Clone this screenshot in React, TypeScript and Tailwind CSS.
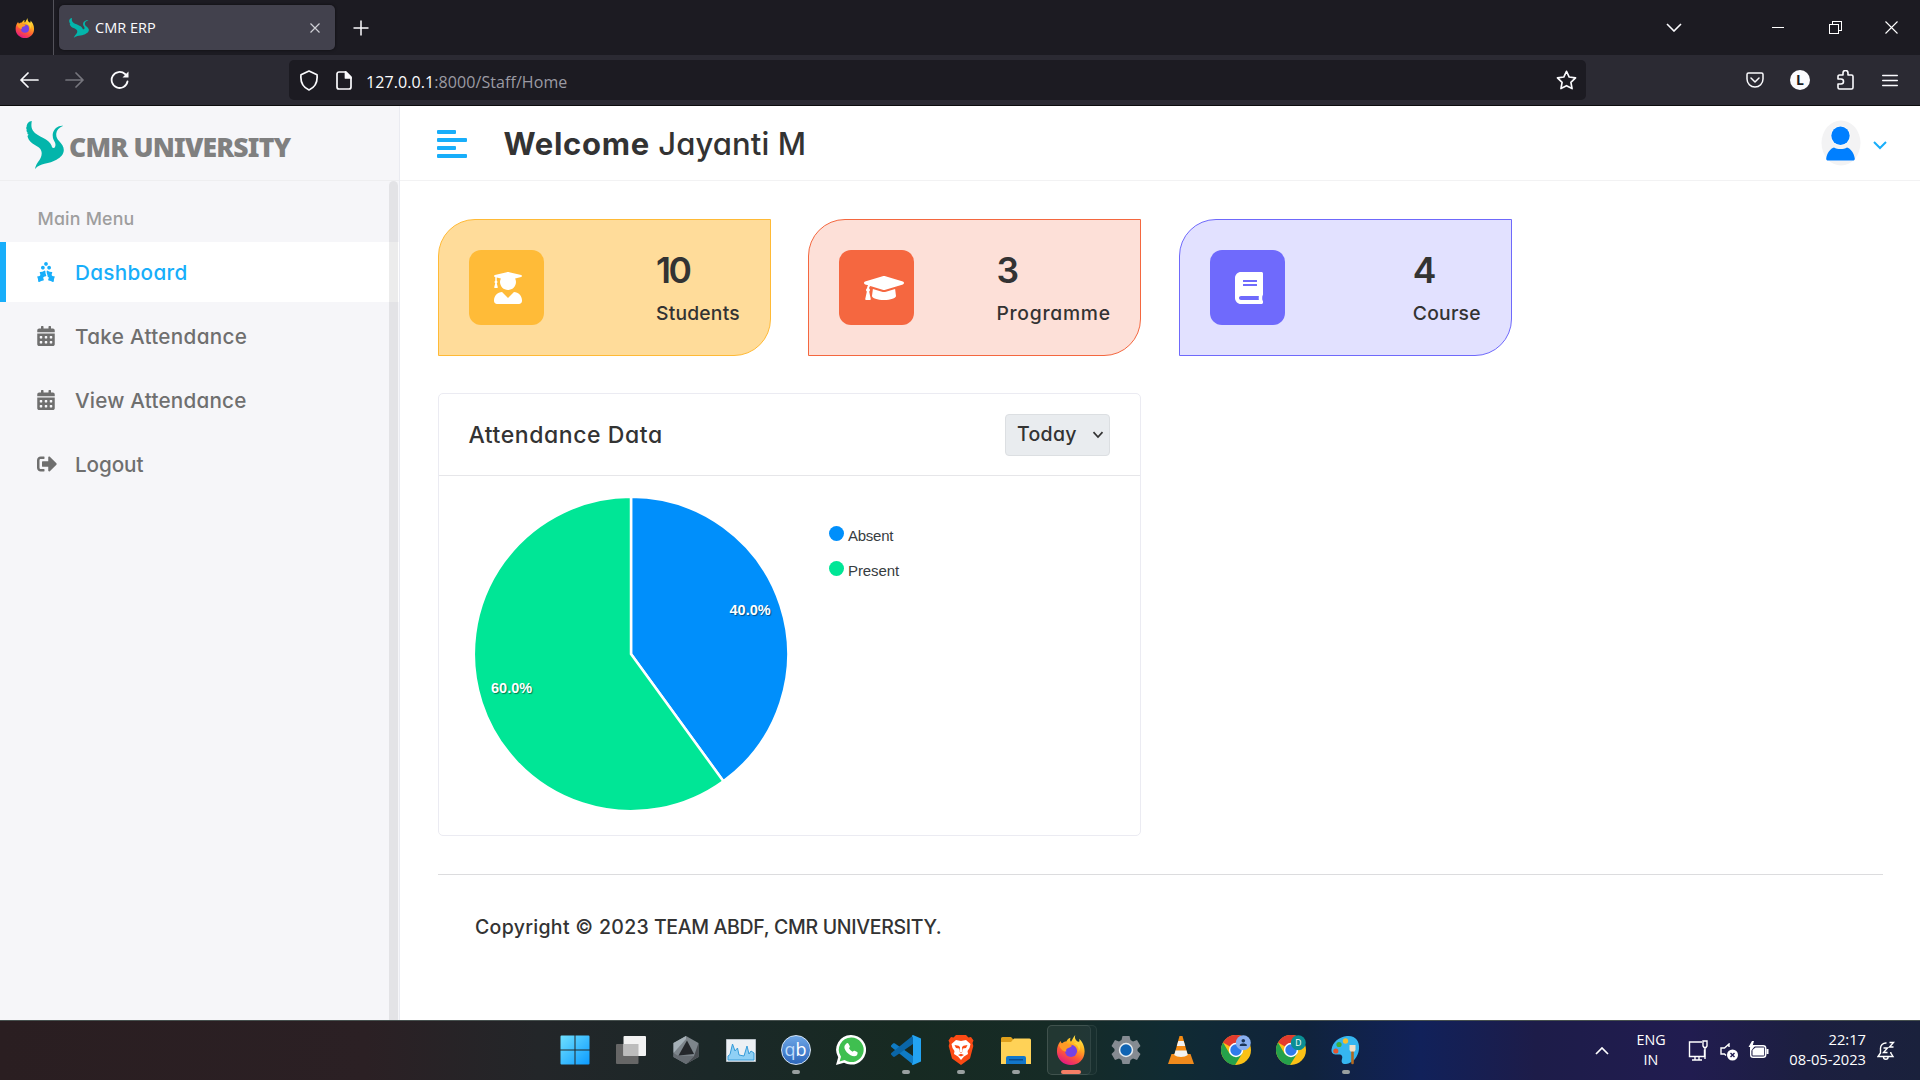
import React from "react";
import { FaHollyBerry, FaCalendarAlt, FaSignOutAlt, FaUserGraduate, FaGraduationCap, FaBook } from "react-icons/fa";

const SEGOE = "font-['Open_Sans',sans-serif]";

function Swan({ className }: { className: string }) {
  return (
    <svg viewBox="0 0 38 48" className={className} preserveAspectRatio="none">
      <path
        fill="#03b5ab"
        d="M5.800 0C3 .4.700 2.500.7 5.500c-.8 1.300-.5 2.300.1 3.300-.7 1 0 2 .7 2.500-.5 1 0 2 1.200 2.500C1.500 14.500 1.300 15 1.700 16c1 3.500 3.500 6 6.800 7.800 3.500 2 6 3.500 6.800 6.200.8 2.500.3 4.700-.6 6.700-1.500 3.500-4.500 5.500-5.700 11.300 3-3.500 6-4.500 9.500-5.300 4.500-.8 8.500-2 12-4 4-2.200 7.300-5.200 7.300-9.700 0-3.500-2.200-6.200-4.500-8.700-2.300-2.300-3.400-4.800-3-8 .4-3.300 2.700-5.500 7-7.600-1.700-.2-3 0-4.300.6-4 1.700-6.300 5-6.300 9.200 0 3.300 1.300 5 2.300 7 1 2.300.3 5.500-1.300 5.500-1.800 0-1.700-1.300-2.200-2.500-1.300-3.500-4.500-5.500-8.200-7.500C13.500 14.800 9 12.800 7 9.700 5 6.700 5.200 3.500 5.800 0Z"
      />
    </svg>
  );
}

function Firefox({ className, id }: { className: string; id: string }) {
  return (
    <svg viewBox="0 0 32 32" className={className}>
      <defs>
        <linearGradient id={id} x1=".8" y1="0" x2=".3" y2="1">
          <stop offset="0" stopColor="#fff44f" />
          <stop offset=".35" stopColor="#ffb01f" />
          <stop offset=".65" stopColor="#ff5a36" />
          <stop offset="1" stopColor="#e31587" />
        </linearGradient>
      </defs>
      <path fill={`url(#${id})`} d="M20.500 0c-1 3 .2 5 2.500 7 .8.7 1.400.5 1.800-.2.400-.9.100-2-.3-2.800 3.500 3 6 7.500 6 13.500C30.500 26 24 32 16 32S1 26 1 17.500c0-4.500 1.500-8.500 4-11 .3 1.300.7 2 1.500 2.500C8 7.500 9 7 11 7c1-2 2.500-3.500 4.500-4-.8 1.800-.6 3.300.5 4.300C17.500 5 18.300 2.500 20.500 0Z" />
      <circle cx="16" cy="17" r="6.500" fill="#7542e5" />
      <path fill="#ff9a26" d="M3 10c4-2 8-1.500 10 .5l4 .3c-.5 2.200-3 2.700-4.500 3.200-1.500.6-2 2-1.500 3.500-4 0-6.500-3-8-7.500Z" />
      <path fill="#ffd23a" d="M19 9c4 1 6 5 5 9 2-3 2.500-7 0-11Z" />
    </svg>
  );
}

function Chrome({ badge }: { badge: "user" | "D" }) {
  return (
    <svg viewBox="0 0 30 30" className="size-[30px]">
      <circle cx="15" cy="15" r="15" fill="#fbc116" />
      <path fill="#e33b2e" d="M15 15 2 7.500A15 15 0 0 1 28 7.500H15Z" />
      <path fill="#25a14b" d="M2 7.500A15 15 0 0 0 14 30l7.500-12L15 15 8.500 18.500Z" />
      <circle cx="15" cy="15" r="7.200" fill="#fff" />
      <circle cx="15" cy="15" r="5.700" fill="#2f7bea" />
      <circle cx="22.300" cy="7.700" r="7.500" fill={badge === "D" ? "#0b8f94" : "#8ab0f0"} />
      {badge === "user" ? (
        <g fill="#1c3557">
          <circle cx="22.300" cy="5.700" r="1.800" />
          <path d="M18.800 11v-1c0-2 7-2 7 0v1Z" />
        </g>
      ) : (
        <text x="22.300" y="10.900" textAnchor="middle" fontSize="8.500" fill="#fff" fontFamily="Open Sans, sans-serif">
          D
        </text>
      )}
    </svg>
  );
}

function BrowserChrome() {
  return (
    <header className={`${SEGOE} h-[106px] border-b border-[#0c0c0d] bg-[#2b2a33] text-[#fbfbfe]`}>
      <div className="flex h-[55px] items-center bg-[#1c1b22]">
        <div className="flex h-full w-[54px] items-center justify-center border-r border-[#53525a] pr-[3px]">
          <Firefox id="ff-tab" className="size-[20px]" />
        </div>
        <div className="ml-[5px] flex h-[45px] w-[276px] items-center rounded-[5px] bg-[#42414d] pr-[15px] pl-[10px] shadow-[0_0_3px_rgba(0,0,0,0.6)]">
          <Swan className="h-[20px] w-[20px]" />
          <span className="mt-px ml-[6px] grow text-[14.500px]">CMR ERP</span>
          <svg viewBox="0 0 10 10" className="size-[10px]" stroke="#d0d0d6" strokeWidth="1.200">
            <path d="M.5.5l9 9M9.500.5l-9 9" />
          </svg>
        </div>
        <svg viewBox="0 0 16 16" className="ml-[18px] size-[16px]" stroke="#fbfbfe" strokeWidth="1.500">
          <path d="M8 .5v15M.5 8h15" />
        </svg>
        <div className="ml-auto flex items-center pr-[22px]">
          <svg viewBox="0 0 16 9" className="h-[9px] w-[16px]" fill="none" stroke="#fbfbfe" strokeWidth="1.600">
            <path d="M1 1l7 7 7-7" />
          </svg>
          <div className="ml-[90px] h-px w-[12px] bg-white" />
          <svg viewBox="0 0 13 13" className="ml-[45px] size-[13px]" fill="none" stroke="#fff" shapeRendering="crispEdges">
            <path d="M.5 3.500h9v9h-9zM3.500 3.500v-3h9v9h-3" />
          </svg>
          <svg viewBox="0 0 13 13" className="ml-[43px] size-[13px]" stroke="#fff" strokeWidth="1.100">
            <path d="M.5.5l12 12M12.500.5l-12 12" />
          </svg>
        </div>
      </div>
      <div className="flex h-[50px] items-center">
        <svg viewBox="0 0 19 16" className="ml-[20px] h-[16px] w-[19px]" fill="none" stroke="#fbfbfe" strokeWidth="1.700" strokeLinecap="round" strokeLinejoin="round">
          <path d="M8 1L1 8l7 7M1 8h17" />
        </svg>
        <svg viewBox="0 0 19 16" className="ml-[26px] h-[16px] w-[19px]" fill="none" stroke="#76757d" strokeWidth="1.700" strokeLinecap="round" strokeLinejoin="round">
          <path d="M11 1l7 7-7 7M18 8H1" />
        </svg>
        <svg viewBox="0 0 20 20" className="ml-[26px] size-[20px]" fill="none" stroke="#fbfbfe" strokeWidth="1.800" strokeLinecap="round">
          <path d="M17.500 11.500A8 8 0 1 1 15 4l2 2" />
          <path d="M18.500 1.500v6h-6z" fill="#fbfbfe" stroke="none" />
        </svg>
        <div className="ml-[159px] flex h-[40px] w-[1297px] items-center rounded-[5px] bg-[#1c1b22] pr-[9px] pl-[10px]">
          <svg viewBox="0 0 20 21" className="h-[21px] w-[20px]" fill="none" stroke="#fbfbfe" strokeWidth="1.700" strokeLinejoin="round">
            <path d="M10 1l8 3.800c.6 5.500-1 12-8 15.200C3 16.800 1.400 10.300 2 4.800Z" />
          </svg>
          <svg viewBox="0 0 16 19" className="ml-[17px] h-[19px] w-[16px]" fill="none" stroke="#fbfbfe" strokeWidth="1.700" strokeLinejoin="round">
            <path d="M3 1h7l5 5v10a2 2 0 0 1-2 2H3a2 2 0 0 1-2-2V3a2 2 0 0 1 2-2Z" />
            <path d="M9.500 1v6H15Z" fill="#fbfbfe" />
          </svg>
          <p className="mt-[3px] ml-[14px] grow text-[16px] tracking-[0.080px] text-[#9b9aa3]">
            <span className="text-[#fbfbfe]">127.0.0.1</span>:8000/Staff/Home
          </p>
          <svg viewBox="0 0 20 20" className="size-[21px]" fill="none" stroke="#fbfbfe" strokeWidth="1.600" strokeLinejoin="round">
            <path d="M10 1.200l2.600 5.500 6 .8-4.400 4.200 1.100 6L10 14.900l-5.300 2.800 1.100-6L1.400 7.500l6-.8Z" />
          </svg>
        </div>
        <div className="ml-auto flex items-center pr-[22px]">
          <svg viewBox="0 0 18 16" className="h-[16px] w-[18px]" fill="none" stroke="#fbfbfe" strokeWidth="1.500" strokeLinecap="round" strokeLinejoin="round">
            <path d="M2.500 1h13A1.500 1.500 0 0 1 17 2.500V7A8 8 0 0 1 1 7V2.500A1.500 1.500 0 0 1 2.500 1Z" />
            <path d="M5 6l4 4 4-4" />
          </svg>
          <div className="ml-[26px] flex size-[20px] items-center justify-center rounded-full bg-[#fbfbfe] text-[14px] leading-none font-bold text-[#1c1b22]">L</div>
          <svg viewBox="0 0 17 20" className="ml-[27px] h-[20px] w-[17px]" fill="none" stroke="#fbfbfe" strokeWidth="1.600" strokeLinejoin="round">
            <path d="M1 9V6.500A1.500 1.500 0 0 1 2.500 5H6V3a2.500 2.500 0 0 1 5 0v2h3.500A1.500 1.500 0 0 1 16 6.500v11a1.500 1.500 0 0 1-1.500 1.500h-12A1.500 1.500 0 0 1 1 17.500V14h3a2.500 2.500 0 0 0 0-5Z" />
          </svg>
          <svg viewBox="0 0 16 13" className="ml-[28px] h-[13px] w-[16px]" stroke="#fbfbfe" strokeWidth="1.400" strokeLinecap="round">
            <path d="M.7 1.500h14.600M.7 6.500h14.600M.7 11.500h14.600" />
          </svg>
        </div>
      </div>
    </header>
  );
}

const menu = [
  { label: "Take Attendance", icon: FaCalendarAlt, size: "h-[20px] w-[18px]", tracking: "tracking-[0.300px]" },
  { label: "View Attendance", icon: FaCalendarAlt, size: "h-[20px] w-[18px]", tracking: "tracking-[0.200px]" },
  { label: "Logout", icon: FaSignOutAlt, size: "size-[20px]", tracking: "tracking-[-0.100px]" },
];

function Sidebar() {
  return (
    <aside className="relative flex w-[400px] shrink-0 flex-col border-r border-[#eaebf1] bg-[#f6f6f9]">
      <div className="flex h-[75px] items-center border-b border-[#eeeef0] pl-[26px]">
        <Swan className="mt-[3px] h-[48px] w-[38px]" />
        <span className="mt-[8px] ml-[5px] font-['Noto_Sans',sans-serif] text-[26.500px] leading-none font-black tracking-[-0.800px] whitespace-nowrap text-[#808080]">CMR UNIVERSITY</span>
      </div>
      <nav className="text-[20.700px] font-medium text-[#6f6f6f]">
        <h2 className="h-[61px] pl-[37.500px] text-[17.800px] leading-[76px] tracking-[0.200px] text-[#9e9e9e]">Main Menu</h2>
        <div className="mb-1 flex h-[60px] items-center border-l-6 border-[#18aefa] bg-white pl-[31px] text-[#18aefa]">
          <FaHollyBerry className="h-[20px] w-[18px]" />
          <span className="ml-[20px] pt-px tracking-[0.300px]">Dashboard</span>
        </div>
        {menu.map(({ label, icon: Icon, size, tracking }) => (
          <div key={label} className="mb-1 flex h-[60px] items-center pl-[37px]">
            <div className="w-[38px]">
              <Icon className={size} />
            </div>
            <span className={`pt-px ${tracking}`}>{label}</span>
          </div>
        ))}
      </nav>
      {/* scrollbar overlay */}
      <div className="absolute top-[75px] right-[1px] bottom-0 w-[9px] rounded-t-full bg-black/[0.075]" />
    </aside>
  );
}

const cards = [
  { n: "10", label: "Students", icon: FaUserGraduate, iw: "w-[28px]", box: "border-[#ffba36] bg-[#ffdc9a]", tile: "bg-[#ffbb38]", text: "w-[84px] tracking-[0.200px]" },
  { n: "3", label: "Programme", icon: FaGraduationCap, iw: "w-[40px]", box: "border-[#f4673f] bg-[#fde0d8]", tile: "bg-[#f56740]", text: "w-[114px] tracking-[0.750px]" },
  { n: "4", label: "Course", icon: FaBook, iw: "w-[28px]", box: "border-[#6f69fb] bg-[#e2e1ff]", tile: "bg-[#6f6afc]", text: "w-[68px] tracking-[0.250px]" },
];

function StatCards() {
  return (
    <section className="flex gap-[37.400px]">
      {cards.map(({ n, label, icon: Icon, iw, box, tile, text }) => (
        <article key={label} className={`flex h-[137px] w-[333px] items-center justify-between rounded-tl-[37px] rounded-br-[37px] border px-[30px] ${box}`}>
          <div className={`flex size-[75px] items-center rounded-[12px] pl-[25px] text-white ${tile}`}>
            <Icon className={`h-[32px] shrink-0 ${iw}`} />
          </div>
          <div className={`pt-[9px] whitespace-nowrap ${text}`}>
            <p className={`text-[35.500px] leading-[42px] font-semibold ${n === "10" ? "tracking-[-2.500px]" : "tracking-normal"}`}>{n}</p>
            <p className="text-[19.300px] leading-[42px] font-medium">{label}</p>
          </div>
        </article>
      ))}
    </section>
  );
}

function AttendancePanel() {
  return (
    <section className="mt-[37px] h-[443px] w-[703px] rounded-[5px] border border-[#ebebf2]">
      <div className="flex h-[82px] items-center justify-between border-b border-[#e6e6e9] pr-[30px] pl-[29.500px]">
        <h2 className="pt-px text-[23px] font-medium tracking-[0.560px]">Attendance Data</h2>
        <div className="flex h-[42px] w-[105px] items-center justify-between rounded-[4px] border border-[#dcdfe2] bg-[#e9ecef] pt-px pr-[5px] pl-[11px] text-[19.500px] font-medium tracking-[0.300px]">
          Today
          <svg viewBox="0 0 12 8" className="h-[8px] w-[12px]" fill="none" stroke="#333" strokeWidth="1.700">
            <path d="M1.500 1.200L6 6l4.500-4.800" />
          </svg>
        </div>
      </div>
      <div className="flex pl-[34px]">
        <svg viewBox="0 0 316 316" className="mt-[20px] size-[316px] overflow-visible font-['Liberation_Sans',sans-serif] font-bold">
          <g stroke="#fff" strokeWidth="2.500">
            <path fill="#008ffb" d="M158 158V.8a157.200 157.200 0 0 1 92.400 284.400Z" />
            <path fill="#00e696" d="M158 158l92.400 127.200A157.200 157.200 0 1 1 158 .8Z" />
          </g>
          <g fill="#fff" fontSize="14.500" className="[text-shadow:1px_1px_1px_rgba(0,0,0,0.45)]">
            <text x="256.500" y="119">
              40.0%
            </text>
            <text x="18" y="197">
              60.0%
            </text>
          </g>
        </svg>
        <ul className="mt-[49px] ml-[40px] flex flex-col font-['Liberation_Sans',sans-serif] text-[15px] text-[#373d3f]">
          <li className="flex h-[35px] items-start">
            <i className="mt-[1px] mr-[4px] size-[15px] rounded-full bg-[#008ffb]" />
            <span className="leading-[21px] tracking-[-0.250px]">Absent</span>
          </li>
          <li className="flex h-[35px] items-start">
            <i className="mt-[1px] mr-[4px] size-[15px] rounded-full bg-[#00e696]" />
            <span className="leading-[21px] tracking-[-0.100px]">Present</span>
          </li>
        </ul>
      </div>
    </section>
  );
}

function Main() {
  return (
    <main className="flex grow flex-col bg-white text-[#333]">
      <div className="flex h-[75px] shrink-0 items-center border-b border-[#f2f2f3] pl-[37px]">
        <div className="mt-[2px] flex w-[30px] flex-col gap-[4px]">
          <i className="h-[4px] w-[19px] rounded-[1px] bg-[#18aefa]" />
          <i className="h-[4px] w-[30px] rounded-[1px] bg-[#18aefa]" />
          <i className="h-[4px] w-[19px] rounded-[1px] bg-[#18aefa]" />
          <i className="h-[4px] w-[30px] rounded-[1px] bg-[#18aefa]" />
        </div>
        <h1 className="mt-[3px] ml-[36.500px] text-[31px] font-medium tracking-[0.100px]">
          <b className="tracking-[0.700px]">Welcome</b> Jayanti M
        </h1>
        <svg viewBox="0 0 40 46" className="ml-auto h-[46px] w-[40px]">
          <ellipse cx="20" cy="23" rx="19.500" ry="22.500" fill="#f3f3f4" />
          <circle cx="19.500" cy="15.700" r="10" fill="#fff" opacity=".7" />
          <circle cx="19.500" cy="15.700" r="9.200" fill="#007fff" />
          <path fill="#007fff" d="M5.200 38.500C6 33 9.500 28.500 13 27.500c3.500 2 9.500 2 13 0 3.500 1 7 5.500 7.800 11 0 1.500-.5 2-2 2H7.200c-1.500 0-2-.5-2-2Z" />
        </svg>
        <svg viewBox="0 0 14 9" className="mt-[4px] mr-[33px] ml-[12px] h-[9px] w-[14px]" fill="none" stroke="#18aefa" strokeWidth="2">
          <path d="M1 1l6 6 6-6" />
        </svg>
      </div>
      <div className="pt-[38px] pr-[37px] pl-[38px]">
        <StatCards />
        <AttendancePanel />
        <footer className="mt-[38px] border-t border-[#dcdcde] pt-[37px] pl-[37px] text-[19.500px] leading-[30px] font-medium tracking-[-0.320px]">
          <span className="tracking-[0.300px]">Copyright © 2023</span> TEAM ABDF, CMR UNIVERSITY.
        </footer>
      </div>
    </main>
  );
}

function Slot({ children, state }: { children: React.ReactNode; state?: "open" | "active" }) {
  return (
    <div className="relative flex h-[59px] w-[55px] items-center justify-center">
      {state === "active" && (
        <>
          <i className="absolute top-[4px] left-[4px] h-[50px] w-[50px] rounded-[5px] border border-white/7 bg-white/[0.02]" />
          <i className="absolute top-[4px] left-[4px] h-[50px] w-[44px] rounded-[5px] border border-white/7 bg-white/[0.04]" />
          <i className="absolute top-[49px] left-[18px] h-[4px] w-[20px] rounded-full bg-[#f47f66]" />
        </>
      )}
      {state === "open" && <i className="absolute top-[49px] left-[24px] h-[4px] w-[8px] rounded-full bg-[#99a0a0]" />}
      <div className="relative mb-px">{children}</div>
    </div>
  );
}

function Taskbar() {
  return (
    <footer className={`${SEGOE} flex h-[60px] items-center border-t border-[#46504e] bg-[linear-gradient(90deg,#2a1e21_0%,#2b2024_19%,#232629_28%,#1b2828_37%,#172a22_47%,#162b26_55%,#102b33_61%,#10233c_68%,#11215a_74%,#1d1c49_80%,#211c50_88%,#1c1f40_94%,#1a213c_100%)] pl-[547.500px] text-white`}>
      <Slot>
        <svg viewBox="0 0 30 30" className="size-[30px]">
          <defs>
            <linearGradient id="win" x1="0" y1="0" x2="1" y2="1">
              <stop offset="0" stopColor="#6fe0ff" />
              <stop offset="1" stopColor="#0c9bff" />
            </linearGradient>
          </defs>
          <path fill="url(#win)" d="M.5 1.500a1 1 0 0 1 1-1h13v14H.5zM15.500.500h13a1 1 0 0 1 1 1v13h-14zM.500 15.500h14v14h-13a1 1 0 0 1-1-1zM15.500 15.500h14v13a1 1 0 0 1-1 1h-13z" />
        </svg>
      </Slot>
      <Slot>
        <svg viewBox="0 0 30 28" className="ml-[2px] h-[28px] w-[30px]">
          <rect x="0" y="8" width="22.500" height="20" rx="1" fill="#666" />
          <rect x="7.500" y="0" width="22.500" height="20" rx="1" fill="#f2f2f2" />
          <path d="M7.500 8h15v12h-15z" fill="#bcbcbc" />
        </svg>
      </Slot>
      <Slot>
        <svg viewBox="0 0 26 28" className="ml-[2px] h-[28px] w-[26px]">
          <path fill="#7d858b" d="M13 0l12.500 7v14L13 28 .5 21V7Z" />
          <path fill="#a5b0b7" d="M13 0L.5 7v10L13 3Z" />
          <path fill="#4a4e53" d="M25.500 7v14L13 28l8-8Z" />
          <path fill="#666c72" d="M.5 17v4L13 28l8-8-16.500-.5Z" />
          <path fill="#24272b" d="M14 4.500L21 18 5.500 19.500Z" />
        </svg>
      </Slot>
      <Slot>
        <svg viewBox="0 0 30 23" className="ml-[2px] h-[23px] w-[30px]">
          <path d="M.5.500h29v22H.5z" fill="#ecf0f4" stroke="#b9c0c7" />
          <path d="M2 17l2-1.500L6.500 5 9 12l2.500-3 1.500 7 5 1L21 7l2 8 2-3 3 2v7H2Z" fill="#8fd0f5" stroke="#369cd9" />
        </svg>
      </Slot>
      <Slot state="open">
        <div className="ml-px flex size-[30px] items-center justify-center rounded-full border-[1.500px] border-[#d5e4f5] bg-linear-to-b from-[#6da6e6] to-[#2d67bb] pb-[3px] text-[18px] leading-none">
          <span className="text-[#bfdcfb]">q</span>
          <span>b</span>
        </div>
      </Slot>
      <Slot>
        <svg viewBox="0 0 30 30" className="ml-px size-[30px]">
          <path fill="#fff" d="M15.200 0A14.800 14.800 0 1 1 8 27.700L0 30l2.200-7.800A14.800 14.800 0 0 1 15.200 0Z" />
          <path fill="#3fbf50" d="M15.200 2.500A12.300 12.300 0 1 1 8.500 25L3.600 26.400 5 21.700A12.300 12.300 0 0 1 15.200 2.500Z" />
          <path fill="#fff" transform="translate(7 7)" d="M3.500 1.500c.5-.6 1.500-.6 2 .2l1.300 2.600c.2.600 0 1-.8 2 .8 1.600 2 2.700 3.700 3.500.9-1 1.200-1.300 1.900-1l2.600 1.300c.7.500.5 2.500-.5 3.400-1.500 1.200-3.700 1-6.200-.3C4.700 11.700 2.300 9 1.500 6.300c-.5-2 .5-3.800 2-4.800Z" />
        </svg>
      </Slot>
      <Slot state="open">
        <svg viewBox="0 0 30 30" className="ml-px size-[30px]">
          <path fill="#0f7bc4" d="M2 8.500L.3 10.200c-.5.500-.5 1.300 0 1.800L22 29.500V21L4 8.500c-.6-.5-1.400-.5-2 0Z" />
          <path fill="#0a66a8" d="M2 21.500L.3 19.800c-.5-.5-.5-1.300 0-1.800L22 .5V9L4 21.500c-.6.500-1.400.5-2 0Z" />
          <path fill="#23a3f2" d="M22 0l8 3.500v23L22 30c-.5 0-1-.2-1.200-.8L22 27.500v-25L20.800.8Z" />
        </svg>
      </Slot>
      <Slot state="open">
        <svg viewBox="0 0 26 30" className="ml-px h-[30px] w-[26px]">
          <path fill="#fb4a14" d="M8 0h10l2.500 2.500L23 2l2.500 3.500-1 2.500.8 3-3.300 12.500-9 6.500-9-6.500L.7 11l.8-3-1-2.500L3 2l2.500.5Z" />
          <path fill="#fff" d="M8 5l5 1 5-1 4.500 4-1 4-2 3 .5 3-4 2.500-3 3.500-3-3.500L6 19l.5-3-2-3-1-4Z" />
          <path fill="#fb4a14" d="M6.500 10l4 .7L12 12l-.5 4 .5 1.500h2l.5-1.500-.5-4 1.500-1.300 4-.7-1.500 3-3 .5-.5 3.500h-3l-.5-3.500-3-.5ZM10 20l3-1.200L16 20l-3 1.500Z" />
        </svg>
      </Slot>
      <Slot state="open">
        <svg viewBox="0 0 30 27" className="ml-px h-[27px] w-[30px]">
          <path fill="#dfa01b" d="M0 1.500A1.500 1.500 0 0 1 1.500 0H10l3 3v5H0Z" />
          <path fill="#ffd257" d="M0 5h10l3-3.500h15.500A1.500 1.500 0 0 1 30 3v24H0Z" />
          <path fill="#1277ca" d="M5 27v-6a2 2 0 0 1 2-2h16a2 2 0 0 1 2 2v6Z" />
          <path fill="#0b4c8d" d="M8 22h14v1.500H8z" />
        </svg>
      </Slot>
      <Slot state="active">
        <Firefox id="ff-task" className="ml-px size-[30px]" />
      </Slot>
      <Slot>
        <svg viewBox="0 0 30 30" className="ml-px size-[30px]">
          <path fill="#858b92" d="M11.500 1h7l1 4 2.500 1.500L26 5l3.500 6-3 3v2l3 3L26 25l-4-1.500-2.500 1.500-1 4h-7l-1-4L8 23.500 4 25 .5 19l3-3v-2l-3-3L4 5l4 1.500L10.500 5Z" />
          <circle cx="15" cy="15" r="7.200" fill="#e8edf1" />
          <circle cx="15" cy="15" r="5.700" fill="#1064b3" />
        </svg>
      </Slot>
      <Slot>
        <svg viewBox="0 0 26 28" className="ml-px h-[28px] w-[26px]">
          <path fill="#f08a1c" d="M3.500 18h19L26 28H0Z" />
          <path fill="#f58b12" d="M11.500 0h3L20 20c-3 3-11 3-14 0Z" />
          <path fill="#f2f2f2" d="M10.300 5h5.400l1.500 5H8.800ZM7.500 14.500h11l1.300 4.500c-3 2.500-10.600 2.500-13.600 0Z" />
        </svg>
      </Slot>
      <Slot>
        <div className="ml-px">
          <Chrome badge="user" />
        </div>
      </Slot>
      <Slot>
        <div className="ml-px">
          <Chrome badge="D" />
        </div>
      </Slot>
      <Slot state="open">
        <svg viewBox="0 0 29 30" className="ml-px h-[30px] w-[29px]">
          <path fill="#35b6f0" d="M16 1C24 0 29 6 28 14c-.8 8-6 14-13 15-4 .3-5-2-4-5 1-3-.5-5-4-4.500-4 .5-7-1-6.500-5C1.500 7 8 2 16 1Z" />
          <circle cx="14.500" cy="6" r="2.700" fill="#f4be2f" />
          <circle cx="8" cy="9.500" r="2.600" fill="#3fae3a" />
          <circle cx="4.800" cy="16" r="2.600" fill="#e4552f" />
          <path fill="#efe0c8" d="M18.500 10h6v5l-1.500 2h-3l-1.500-2Z" />
          <path fill="#b4691f" d="M20.200 16.500h2.600V28a1.300 1.300 0 0 1-2.600 0Z" />
        </svg>
      </Slot>
      <div className="ml-auto flex items-center pr-[25px] pb-px">
        <svg viewBox="0 0 14 8" className="mt-[1px] h-[8px] w-[14px]" fill="none" stroke="#fff" strokeWidth="1.700">
          <path d="M1 7l6-6 6 6" />
        </svg>
        <p className="mb-px ml-[27px] w-[30px] text-center text-[14.300px] leading-[20px]">ENG IN</p>
        <svg viewBox="0 0 20 21" className="ml-[22px] h-[21px] w-[20px]" fill="none" stroke="#fff" strokeWidth="1.400">
          <path d="M14 2H1.500v14.500H16.500V9.500M4 20h10M7 17v3M11 17v3" />
          <path d="M15 1h4v5l-1 1.500h-2L15 6Z" />
          <path d="M17 7.500V19" />
        </svg>
        <svg viewBox="0 0 19 18" className="mt-[4px] ml-[12px] h-[18px] w-[19px]" fill="none" stroke="#fff" strokeWidth="1.400">
          <path d="M9 4V1L4.500 5H1v6h3.500L6 12.500" />
          <circle cx="12.500" cy="12" r="5.500" fill="#fff" stroke="none" />
          <path d="M10.500 10l4 4M14.500 10l-4 4" stroke="#211c50" />
        </svg>
        <svg viewBox="0 0 21 17" className="mb-[2px] ml-[9px] h-[17px] w-[21px]">
          <rect x="2.700" y="4.700" width="15" height="11.500" rx="2.500" fill="none" stroke="#fff" strokeWidth="1.400" />
          <path fill="#fff" d="M4.500 9l3-2.500h8.700v8H4.500ZM18.500 8h2v5h-2ZM4 0L.5 6H3L2 11l5-6H4.500L6 0Z" />
        </svg>
        <p className="mb-[3px] ml-[18px] w-[79px] text-right text-[14.700px] leading-[20px] whitespace-nowrap">
          22:17
          <br />
          08-05-2023
        </p>
        <svg viewBox="0 0 18 19" className="ml-[11px] h-[19px] w-[18px]" fill="none" stroke="#fff" strokeWidth="1.400">
          <path d="M9.500 2A5.500 5.500 0 0 0 3.500 8v4L1 15.500h15L13.800 12v-1M6.500 16a2.300 2.300 0 0 0 4.600 0M6.500 7h4l-4 4.500h4M12.500 1.500h4l-4 4.500h4" />
        </svg>
      </div>
    </footer>
  );
}

export default function App() {
  return (
    <div className="flex h-[1080px] w-[1920px] flex-col overflow-hidden bg-white font-['Inter',sans-serif] [font-feature-settings:'cv11']">
      <BrowserChrome />
      <div className="flex min-h-0 grow">
        <Sidebar />
        <Main />
      </div>
      <Taskbar />
    </div>
  );
}
